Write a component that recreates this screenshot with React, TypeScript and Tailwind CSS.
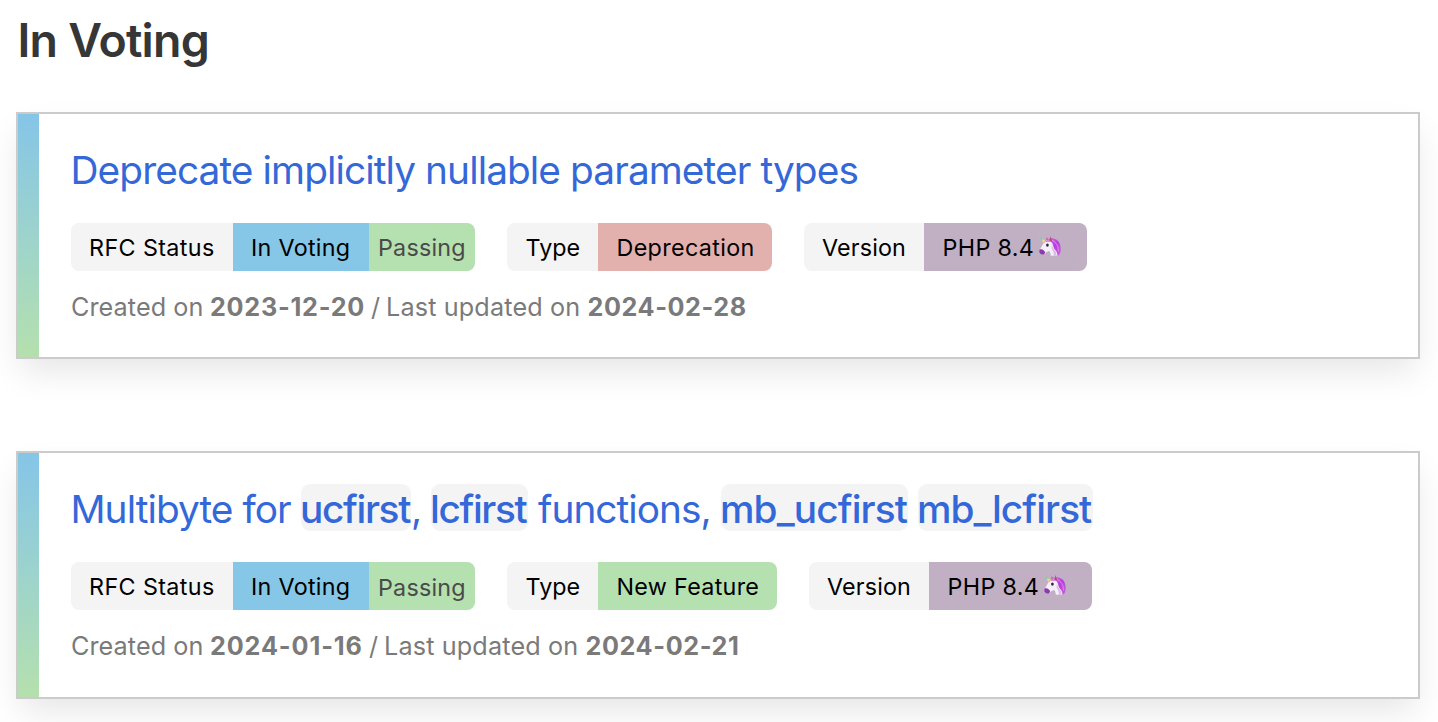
import type { ReactNode } from "react";

function Unicorn() {
  return (
    <svg viewBox="0 0 24 24" className="-mt-0.5 ml-[3.5px] block h-6 w-6 shrink-0" aria-hidden="true">
      <defs>
        <linearGradient id="horn" x1="0" y1="0" x2="1" y2="1">
          <stop offset="0" stopColor="#f0e05a" />
          <stop offset="0.35" stopColor="#56cfc0" />
          <stop offset="0.65" stopColor="#f2e27a" />
          <stop offset="1" stopColor="#ef7fa8" />
        </linearGradient>
        <linearGradient id="mane" x1="0" y1="0" x2="1" y2="1">
          <stop offset="0" stopColor="#d873e6" />
          <stop offset="0.5" stopColor="#b63fdc" />
          <stop offset="1" stopColor="#cf62da" />
        </linearGradient>
      </defs>
      <path d="M9 4.5C14 1.6 20.8 4.2 22.3 10.4C23.3 14.4 22.6 18 20.6 20.8L18.2 16.8L14.6 13L12.5 7Z" fill="url(#mane)" />
      <path d="M14 5.5C18 6.7 20.6 11 20.4 16.4" fill="none" stroke="#eda4f2" strokeWidth="0.7" />
      <path d="M5.8 7.8C8.3 4.5 12.3 4.6 14.2 8.2C15.4 10.2 15.2 12.8 17.4 15.2C18.8 16.5 19.3 18.6 18.9 20.6L12.8 20.7C12.5 18.4 12.2 16.8 11 16.1C9.2 16.8 7.9 17.3 6.8 19.1L1.5 15.7C2.6 13.2 4 10.8 5.8 7.8Z" fill="#f5eefa" />
      <path d="M14 9.2C14.5 12 15.3 13.5 16.7 15C18 16.4 18.5 18.4 18.2 20.6L15.7 20.7C16.6 17.8 14.4 15.7 13.5 13Z" fill="#d5bfe2" />
      <path d="M1.7 14.5C3.9 13.5 6.5 15.1 7.2 17.5C6.7 19.1 5.1 20.1 3.4 19.3C1.3 18.6.8 16.3 1.7 14.5Z" fill="#8a3bae" />
      <path d="M.6 1.1L5.9 8.4L8.1 6.2Z" fill="url(#horn)" />
      <path d="M8 6.2L8.8 1.9L10.3 5.8Z" fill="#b34d70" />
      <path d="M11.5 6.3L12.5 1.1L14.2 6.7Z" fill="#c0486b" />
      <path d="M7.2 5.2C9.6 3.6 11.4 5 12.4 6.9L8.3 7.1Z" fill="#d38be1" />
      <ellipse cx="9.4" cy="10.1" rx="1.35" ry="1.6" fill="#2d2633" />
    </svg>
  );
}

function Label({ children, className }: { children: ReactNode; className: string }) {
  return <span className={`flex h-12 items-center whitespace-pre text-[23.3px] leading-[48px] text-black ${className}`}>{children}</span>;
}

function Code({ children, className }: { children: ReactNode; className: string }) {
  return <code className={`block h-[47px] rounded-[9px] bg-[#f4f4f4] font-['Inter',sans-serif] font-medium leading-[50px] ${className}`}>{children}</code>;
}

function Tags({ type, passing }: { type: ReactNode; passing: string }) {
  return (
    <div className="mt-[29px] flex gap-8">
      <div className="flex overflow-hidden rounded-lg">
        <Label className="w-[162px] bg-[#f4f4f4] pl-[18px] pt-0.5 tracking-[0.39px]">RFC Status</Label>
        <Label className="w-[136px] bg-[#86c6e6] pl-[18px] pt-0.5 tracking-[0.3px]">In Voting</Label>
        <span className={`block h-12 w-[106px] bg-[#b5e0b0] pl-[9px] text-[23.3px] tracking-[0.22px] text-[#4a4a4a] ${passing}`}>Passing</span>
      </div>
      <div className="flex overflow-hidden rounded-lg">
        <Label className="w-[91px] bg-[#f4f4f4] pl-[18.5px] pt-0.5 tracking-[0.05px]">Type</Label>
        {type}
      </div>
      <div className="flex overflow-hidden rounded-lg">
        <Label className="w-[120px] bg-[#f4f4f4] pl-[18px] pt-0.5 tracking-[0.15px]">Version</Label>
        <Label className="w-[163px] bg-[#c1afc3] pl-[18.5px] pt-0.5 tracking-[0.35px]">PHP 8.4<Unicorn /></Label>
      </div>
    </div>
  );
}

function Card({ children, className }: { children: ReactNode; className: string }) {
  return (
    <article className={`flex w-[1404px] border-2 border-[#cbcbcb] bg-white shadow-[0_16px_32px_-4px_rgba(10,10,10,0.1)] ${className}`}>
      <div className="w-[21px] shrink-0 bg-linear-to-b from-[#85c5e7] to-[#b5e0ad]" />
      <div className="flex-1 pl-8 pt-8">{children}</div>
    </article>
  );
}

export default function App() {
  return (
    <main className="h-[722px] w-[1438px] overflow-hidden bg-white pl-4 pt-3 font-['Inter',sans-serif]">
      <h2 className="ml-[1.5px] h-14 text-[46.5px] font-semibold leading-[56px] tracking-[-0.8px] text-[#363636]">In Voting</h2>

      <Card className="mt-11 h-[247px]">
        <h3 className="-ml-[0.5px] h-12 whitespace-nowrap text-[38.8px] leading-[48px] tracking-[-0.905px] text-[#3468d8]">
          Deprecate implicitly nullable parameter types
        </h3>
        <Tags
          passing="leading-[50px]"
          type={<Label className="w-[174px] bg-[#e3b1ad] pl-[18.5px] pt-0.5 tracking-[0.35px]">Deprecation</Label>}
        />
        <p className="mt-[18px] flex h-9 whitespace-nowrap text-[25.2px] leading-9 text-[#7a7a7a]">
          <span className="w-[139px] tracking-[0.07px]">Created on</span>
          <strong className="w-[161px] font-bold tracking-[0.74px]">2023-12-20</strong>
          <span className="w-[15px]">/</span>
          <span className="w-[201.5px] tracking-[0.15px]">Last updated on</span>
          <strong className="font-bold tracking-[0.58px]">2024-02-28</strong>
        </p>
      </Card>

      <Card className="mt-[92px] h-[248px]">
        <h3 className="-ml-[0.5px] flex h-12 whitespace-pre text-[38.8px] leading-[48px] text-[#3468d8]">
          <span className="w-[230.5px] tracking-[-0.93px]">Multibyte for</span>
          <Code className="-mt-px w-[110px] -indent-px tracking-[-1.35px]">ucfirst</Code>
          <span className="w-5">,</span>
          <Code className="-mt-px w-[97px] -indent-px tracking-[-1.35px]">lcfirst</Code>
          <span className="w-[193px] pl-[10px] tracking-[-0.95px]">functions,</span>
          <Code className="-mt-px w-[187px] -indent-px tracking-[-0.88px]">mb_ucfirst</Code>
          <Code className="-mt-px ml-[10px] w-[175px] -indent-px tracking-[-0.92px]">mb_lcfirst</Code>
        </h3>
        <Tags
          passing="leading-[52px]"
          type={<Label className="w-[179px] bg-[#b5e0b0] pl-[18.5px] pt-0.5 tracking-[0.3px]">New Feature</Label>}
        />
        <p className="mt-[18px] flex h-9 whitespace-nowrap text-[25.2px] leading-9 text-[#7a7a7a]">
          <span className="w-[139px] tracking-[0.07px]">Created on</span>
          <strong className="w-[159px] font-bold tracking-[0.88px]">2024-01-16</strong>
          <span className="w-[15px]">/</span>
          <span className="w-[201.5px] tracking-[0.15px]">Last updated on</span>
          <strong className="font-bold tracking-[0.6px]">2024-02-21</strong>
        </p>
      </Card>
    </main>
  );
}
